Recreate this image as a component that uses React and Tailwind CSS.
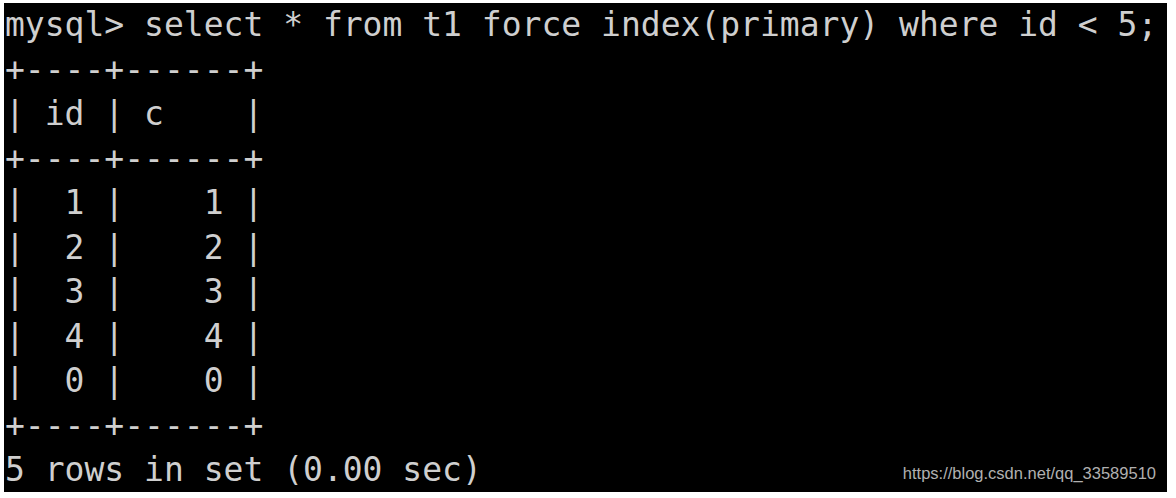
import React from "react";

const lines = [
  "mysql> select * from t1 force index(primary) where id < 5;",
  "+----+------+",
  "| id | c    |",
  "+----+------+",
  "|  1 |    1 |",
  "|  2 |    2 |",
  "|  3 |    3 |",
  "|  4 |    4 |",
  "|  0 |    0 |",
  "+----+------+",
  "5 rows in set (0.00 sec)",
];

const App = () => {
  return (
    <div className="w-[1176px] h-[498px] bg-white pt-[3px] pl-[4px]">
      <div className="relative w-[1163px] h-[489px] bg-black overflow-hidden">
        <div
          className="flex flex-col items-start pl-[1px] text-[33px] leading-[44.5px] text-[#cfcfcf]"
          style={{ fontFamily: '"DejaVu Sans Mono", monospace' }}
        >
          {lines.map((line, i) => (
            <div key={i} className="whitespace-pre">
              {line}
            </div>
          ))}
        </div>
        <div
          className="absolute right-[11px] bottom-[11px] text-[16.5px] leading-none text-[#b0b0b0]"
          style={{ fontFamily: '"Liberation Sans", Arial, sans-serif' }}
        >
          https://blog.csdn.net/qq_33589510
        </div>
      </div>
    </div>
  );
};

export default App;
